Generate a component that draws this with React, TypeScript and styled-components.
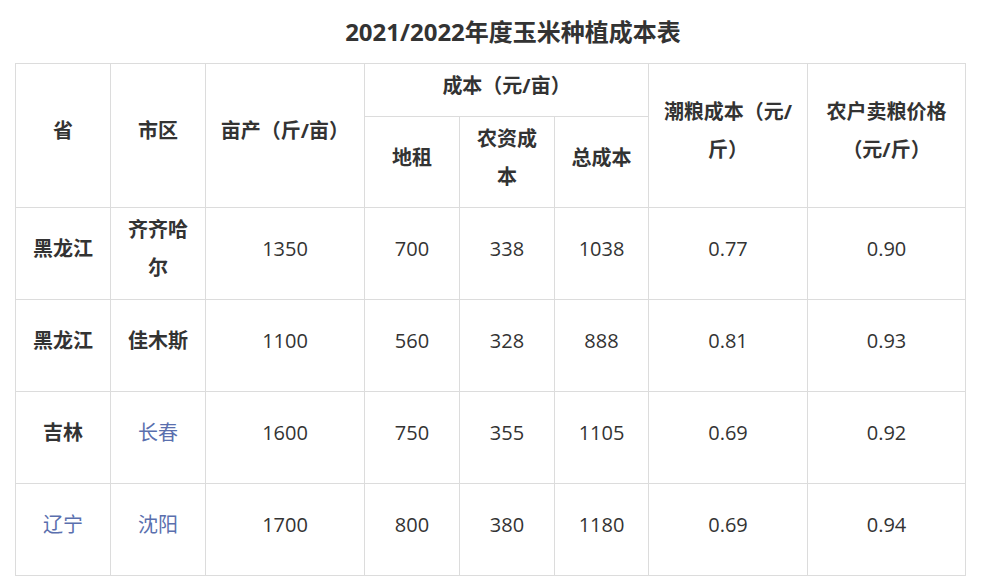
import { createGlobalStyle, styled } from 'styled-components';
import * as React from 'react';

const GlobalStyle = createGlobalStyle`
  html, body {
    margin: 0;
    padding: 0;
    background: #fff;
  }
  body {
    font-family: "Open Sans", "Noto Sans CJK SC", sans-serif;
    color: #333;
  }
`;

type Tone = 'bold' | 'link' | 'plain';

interface IRow {
  province: string;
  provinceTone: Tone;
  city: string;
  cityTone: Tone;
  values: string[];
}

const rows: IRow[] = [
  {
    province: '黑龙江',
    provinceTone: 'bold',
    city: '齐齐哈尔',
    cityTone: 'bold',
    values: ['1350', '700', '338', '1038', '0.77', '0.90'],
  },
  {
    province: '黑龙江',
    provinceTone: 'bold',
    city: '佳木斯',
    cityTone: 'bold',
    values: ['1100', '560', '328', '888', '0.81', '0.93'],
  },
  {
    province: '吉林',
    provinceTone: 'bold',
    city: '长春',
    cityTone: 'link',
    values: ['1600', '750', '355', '1105', '0.69', '0.92'],
  },
  {
    province: '辽宁',
    provinceTone: 'link',
    city: '沈阳',
    cityTone: 'link',
    values: ['1700', '800', '380', '1180', '0.69', '0.94'],
  },
];

const colWidths = [95, 95, 159, 95, 95, 94, 159, 158];

const App: React.FC = () => {
  return (
    <Page>
      <GlobalStyle />
      <Title>2021/2022年度玉米种植成本表</Title>
      <Table>
        <colgroup>
          {colWidths.map((w, i) => (
            <col key={i} style={{ width: w }} />
          ))}
        </colgroup>
        <thead>
          <tr>
            <Th rowSpan={2}>省</Th>
            <Th rowSpan={2}>市区</Th>
            <Th rowSpan={2}>亩产（斤/亩）</Th>
            <Th colSpan={3} $short>
              成本（元/亩）
            </Th>
            <Th rowSpan={2}>潮粮成本（元/斤）</Th>
            <Th rowSpan={2}>农户卖粮价格（元/斤）</Th>
          </tr>
          <tr>
            <Th>地租</Th>
            <Th>农资成本</Th>
            <Th>总成本</Th>
          </tr>
        </thead>
        <tbody>
          {rows.map((r, i) => (
            <tr key={i}>
              <Td $tone={r.provinceTone}>{r.province}</Td>
              <Td $tone={r.cityTone}>{r.city}</Td>
              {r.values.map((v, j) => (
                <Td key={j} $tone="plain">
                  {v}
                </Td>
              ))}
            </tr>
          ))}
        </tbody>
      </Table>
    </Page>
  );
};

const Page = styled.div`
  width: 1000px;
  padding: 16px 35px 0 15px;
  box-sizing: border-box;
`;

const Title = styled.h1`
  margin: 0 0 15px;
  padding-left: 46px;
  text-align: center;
  font: normal 700 24px / 32px "Open Sans", "Noto Sans CJK SC", sans-serif;
  color: #333;
`;

const Table = styled.table`
  width: 950px;
  table-layout: fixed;
  border-collapse: collapse;
  font-size: 20px;
  line-height: 38px;
`;

const Th = styled.th<{ $short?: boolean }>`
  height: ${(p) => (p.$short ? '53px' : '91px')};
  padding: 0 10px 9px;
  box-sizing: border-box;
  border: 1px solid #dcdcdc;
  font-weight: 700;
  text-align: center;
  vertical-align: middle;
  color: #333;
`;

const toneColor: Record<Tone, string> = {
  bold: '#333',
  link: '#5a6fae',
  plain: '#333',
};

const Td = styled.td<{ $tone: Tone }>`
  height: 92px;
  padding: 0 10px 10px;
  box-sizing: border-box;
  border: 1px solid #dcdcdc;
  text-align: center;
  vertical-align: middle;
  font-weight: ${(p) => (p.$tone === 'bold' ? 700 : 400)};
  color: ${(p) => toneColor[p.$tone]};
`;

export default App;
